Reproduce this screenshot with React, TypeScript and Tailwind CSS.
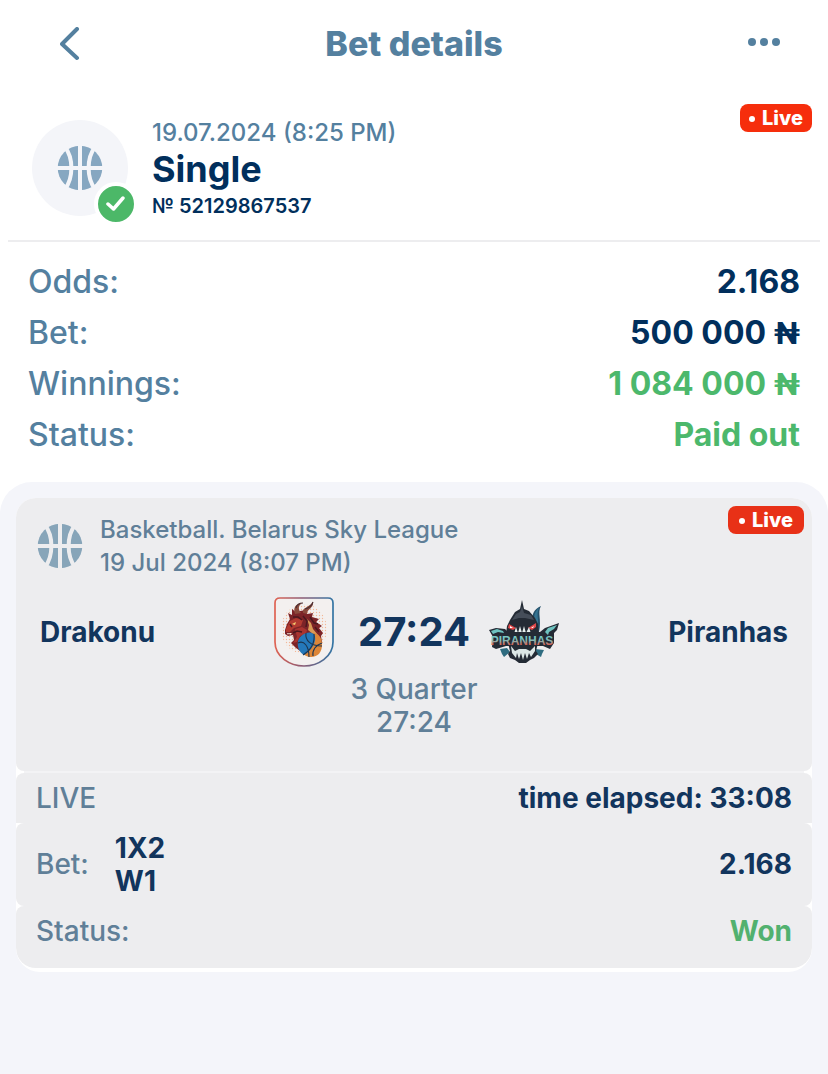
import { ReactNode } from "react";

const summary = [
  { label: "Odds:", value: "2.168", color: "text-[#012f5c]" },
  { label: "Bet:", value: "500 000", currency: "₦", color: "text-[#012f5c]" },
  { label: "Winnings:", value: "1 084 000", currency: "₦", color: "text-[#4cb86c]" },
  { label: "Status:", value: "Paid out", color: "text-[#4cb86c]" },
];

const BasketballIcon = ({ fill, lines }: { fill: string; lines: string }) => (
  <svg width="46" height="46" viewBox="0 0 46 46" aria-hidden="true">
    <circle cx="23" cy="23" r="22.3" className={fill} />
    <g className={lines} fill="none" strokeWidth="4">
      <path d="M23 0V46M0 23H46" />
      <path d="M8 2C16.500 13 16.500 33 8 44M38 2C29.500 13 29.500 33 38 44" />
    </g>
  </svg>
);

const LiveBadge = ({ className }: { className: string }) => (
  <div
    className={`absolute flex h-7 items-center justify-center gap-[7px] rounded-lg text-xl font-extrabold text-white ${className}`}
  >
    <span className="mt-0.5 h-1.5 w-1.5 rounded-full bg-white" />
    Live
  </div>
);

const DragonLogo = () => (
  <svg width="62" height="72" viewBox="0 0 62 72" role="img" aria-label="Drakonu">
    <defs>
      <linearGradient id="shield" x1="0" x2="1">
        <stop offset="0" stopColor="#df6353" />
        <stop offset="0.45" stopColor="#8f5b73" />
        <stop offset="1" stopColor="#3475a4" />
      </linearGradient>
      <pattern id="dots" width="3" height="3" patternUnits="userSpaceOnUse">
        <circle cx="1.500" cy="1.500" r="0.700" fill="#f3b896" />
      </pattern>
    </defs>
    <path
      d="M7 2H55Q60 2 60 7V46C60 61 45 70 31 70C17 70 2 61 2 46V7Q2 2 7 2Z"
      fill="#f3f0ef"
      stroke="url(#shield)"
      strokeWidth="1.700"
    />
    <ellipse cx="31" cy="33" rx="23" ry="25" fill="url(#dots)" />
    {/* mane and neck */}
    <path
      d="M12 34L14 28L17 23L15 17L19 19L19 13L24 17L27 15L33 14L34 18L40 17L39 21L46 23L43 26L49 30L46 32L50 37L48 40L49 46L40 50L30 57L23 52L18 47L21 44L20 39L15 40L12 38Z"
      fill="#7c2428"
    />
    {/* horns */}
    <path d="M22 18C20 12 22 8 29 7C25 10 25 13 28 17M30 17C29 11 34 13 40 6C41 12 34 13 34 18" fill="#8a4b3d" />
    <path d="M23 12C24 8 27 7 30 7M32 13C36 12 39 9 40 6" fill="none" stroke="#4d3033" strokeWidth="1.200" />
    {/* face */}
    <path d="M13 33L17 25L23 22L30 24L28 30L21 32L17 36L13 36Z" fill="#b23a30" />
    <path d="M22 33L29 31L34 34L33 38L27 40L24 46L20 47L24 41Z" fill="#a93430" />
    <path d="M34 23L38 27L40 33L45 39L40 38L35 34L36 29Z" fill="#d99a57" />
    <path
      d="M30 20L34 25L33 31M37 21L41 27L45 28M42 31L46 36M20 21L25 21L29 24M20 37L24 35L29 36M17 28L19 31"
      fill="none"
      stroke="#4a191f"
      strokeWidth="1.500"
    />
    <path d="M19 28L23 26L22 29Z" fill="#f5ce72" />
    <path d="M14 37L15 39L16 37L17 39L19 37Z" fill="#f4dfcf" />
    {/* ball */}
    <path d="M40 37C46 37 49 42 49 49C49 56 45 61 38 61C34 61 31 59 29 57Z" fill="#dd8638" />
    <path d="M25 45C27 38 36 34 41 38C45 45 38 55 31 59C26 56 24 51 25 45Z" fill="#2478ba" />
    <path
      d="M25 47C31 44 36 50 36 61M41 38C42 47 38 54 30 59M33 37C32 44 37 50 49 50M40 60C39 54 43 49 49 47"
      fill="none"
      stroke="#1d3550"
      strokeWidth="1.100"
    />
  </svg>
);

const PiranhaLogo = () => (
  <svg width="72" height="64" viewBox="0 0 72 64" role="img" aria-label="Piranhas">
    <defs>
      <linearGradient id="lettering" x1="0" y1="0" x2="0" y2="1">
        <stop offset="0.300" stopColor="#78c9c5" />
        <stop offset="0.500" stopColor="#8cb1ad" />
        <stop offset="0.800" stopColor="#e2584c" />
      </linearGradient>
    </defs>
    {/* tail */}
    <path d="M44 21C44 14 46 9 53 6C49 13 54 19 51 32L45 29Z" fill="#24506a" />
    <path d="M46 20C46 14 48 10 51 8C48 15 51 19 50 25Z" fill="#347391" />
    {/* head */}
    <path d="M34 0L36 9L41 11L47 18L50 24L51 34H18L19 26L22 20L27 12L32 9Z" fill="#242b35" />
    <path d="M34 6L36 13L43 15L46 20L37 18L31 18L24 20L28 14L32 12Z" fill="#454d59" />
    <path d="M21 24L28 28L25 30L20 28ZM40 28L48 23L48 27L44 30Z" fill="#e2484a" />
    <path d="M22 26L25 28L22 28ZM43 28L46 26L45 28Z" fill="#ffffff" />
    <path d="M26 34L28 27L30 33L32 26L34 33L36 26L38 33L41 27L43 34Z" fill="#e6efee" />
    {/* jaw and fins */}
    <path d="M12 49L19 48L22 52L16 57L14 54ZM47 49L56 50L54 54L53 57L48 54Z" fill="#2f6c80" />
    <path d="M20 43H50L48 51L50 54L46 58L42 60L38 63H31L27 60L22 58L20 54L22 51Z" fill="#242b35" />
    <path
      d="M23 46L24 53L28 58L29 53L31 59L33 53L35 60L37 53L39 59L41 53L43 57L47 51L47 46L42 51L38 49H31L27 51Z"
      fill="#dce7e6"
    />
    {/* lettering */}
    <path
      d="M1 30L8 28L17 29L20 32H52L57 28L71 23L69 30L66 33L66 43L62 49L55 46H18L8 49L4 47L5 37Z"
      fill="#242b35"
    />
    <text
      x="34"
      y="45"
      textAnchor="middle"
      className="font-['Liberation_Sans',sans-serif] text-[12px] font-bold"
      fill="url(#lettering)"
    >
      PIRANHAS
    </text>
    <path d="M3 31L9 29L15 31L16 33L10 32L5 34ZM57 32L60 28L69 25L66 29L61 32L60 35Z" fill="#6ec3c0" />
  </svg>
);

const Section = ({ children, className }: { children: ReactNode; className: string }) => (
  <div className={`flex items-center justify-between bg-[#ededef] px-5 ${className}`}>{children}</div>
);

const App = () => {
  return (
    <div className="flex min-h-screen flex-col bg-white font-['Inter','Liberation_Sans',sans-serif] text-[#54809f]">
      <header className="grid h-[88px] grid-cols-[80px_1fr_80px] items-center px-6">
        <button type="button" aria-label="Back" className="flex h-12 items-center pl-9">
          <svg width="20" height="34" viewBox="0 0 20 34" fill="none" aria-hidden="true">
            <path d="M17 2L2 17L17 31" stroke="#54809f" strokeWidth="4" strokeLinecap="round" strokeLinejoin="round" />
          </svg>
        </button>
        <h1 className="text-center text-[34px] leading-10 font-extrabold">Bet details</h1>
        <button type="button" aria-label="More" className="flex h-12 items-center justify-end gap-1 pr-6 pb-1">
          <span className="h-2 w-2 rounded-full bg-[#54809f]" />
          <span className="h-2 w-2 rounded-full bg-[#54809f]" />
          <span className="h-2 w-2 rounded-full bg-[#54809f]" />
        </button>
      </header>

      <main className="flex flex-1 flex-col">
        <section className="relative mx-2 flex h-[154px] gap-6 border-b-2 border-[#ededef] pt-8 pl-6">
          <div className="relative flex h-24 w-24 items-center justify-center rounded-full bg-[#f4f5f9]">
            <BasketballIcon fill="fill-[#86a7c1]" lines="stroke-[#f4f5f9]" />
            <span className="absolute -right-2.5 -bottom-2.5 flex h-11 w-11 items-center justify-center rounded-full border-4 border-white bg-[#4cb868]">
              <svg width="20" height="18" viewBox="0 0 20 18" fill="none" aria-hidden="true">
                <path d="M2 9L7.500 14L17 3" stroke="#ffffff" strokeWidth="3.500" strokeLinecap="round" strokeLinejoin="round" />
              </svg>
            </span>
          </div>
          <div>
            <p className="text-2xl leading-[26px] font-medium">19.07.2024 (8:25 PM)</p>
            <h2 className="text-4xl leading-[46px] font-bold text-[#012f5c]">Single</h2>
            <p className="text-xl leading-7 font-semibold text-[#012f5c]">№ 52129867537</p>
          </div>
          <LiveBadge className="top-4 right-2 w-[72px] bg-[#f62e0c]" />
        </section>

        <dl className="px-7 pt-[14px] pb-[22px]">
          {summary.map((row) => (
            <div key={row.label} className="flex h-[51px] items-center justify-between text-[32px]">
              <dt className="font-medium">{row.label}</dt>
              <dd className={`font-bold ${row.color}`}>
                {row.value}
                {row.currency && <span className="font-['Roboto',sans-serif]"> {row.currency}</span>}
              </dd>
            </div>
          ))}
        </dl>

        <section className="flex-1 rounded-t-[32px] bg-[#f4f5fa] px-4 pt-4 pb-8">
          <div className="overflow-hidden rounded-t-[20px] rounded-b-3xl bg-white pb-1 text-[28px] leading-[33px] text-[#607f98]">
            <div className="relative h-[273px] rounded-lg bg-[#ededef] pt-[15px]">
              <div className="flex items-center gap-[17px] pl-[21px]">
                <BasketballIcon fill="fill-[#87a5b9]" lines="stroke-[#ededef]" />
                <p className="text-2xl leading-[33px] font-medium">
                  Basketball. Belarus Sky League
                  <br />
                  19 Jul 2024 (8:07 PM)
                </p>
              </div>
              <LiveBadge className="top-2 right-2 w-[76px] bg-[#e83117]" />
              <div className="mt-[17px] grid grid-cols-[1fr_auto_1fr] items-center px-6 font-bold text-[#12355d]">
                <span>Drakonu</span>
                <div className="flex items-center">
                  <div className="flex w-[72px] justify-center">
                    <DragonLogo />
                  </div>
                  <span className="w-[148px] text-center text-[40px] leading-10">27:24</span>
                  <PiranhaLogo />
                </div>
                <span className="text-right">Piranhas</span>
              </div>
              <p className="mt-[5px] text-center font-medium">
                3 Quarter
                <br />
                27:24
              </p>
            </div>
            <div className="mx-2 h-0.5 bg-[#f3f3f5]" />
            <Section className="h-[50px] rounded-t-lg">
              <span className="font-medium">LIVE</span>
              <span className="font-bold text-[#12355d]">time elapsed: 33:08</span>
            </Section>
            <Section className="h-[83px] rounded-lg">
              <div className="flex items-center gap-[26px]">
                <span className="font-medium">Bet:</span>
                <span className="font-bold text-[#12355d]">
                  1X2
                  <br />
                  W1
                </span>
              </div>
              <span className="font-bold text-[#12355d]">2.168</span>
            </Section>
            <Section className="h-[62px] rounded-t-lg rounded-b-[20px] pb-3">
              <span className="font-medium">Status:</span>
              <span className="font-bold text-[#52b16f]">Won</span>
            </Section>
          </div>
        </section>
      </main>
    </div>
  );
};

export default App;
